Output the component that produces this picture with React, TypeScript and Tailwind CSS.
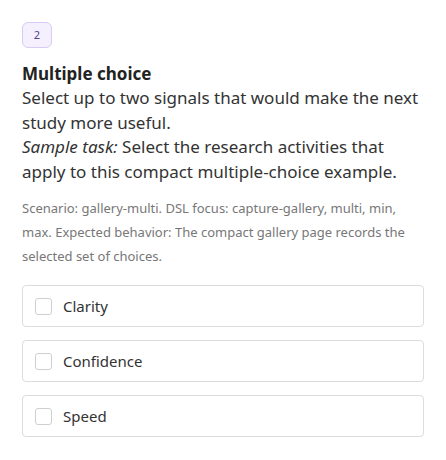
import React from "react";

const options = ["Clarity", "Confidence", "Speed"];

export default function App() {
  return (
    <div
      className="w-[446px] h-[460px] bg-white px-[22px] pt-[22px]"
      style={{ fontFamily: '"Noto Sans", "Noto Sans CJK KR", sans-serif' }}
    >
      <div className="flex h-[26px] w-[30px] items-center justify-center rounded-[6px] border border-[#d8ccf3] bg-[#f4f0fd] text-[11px] text-[#55409a]">
        2
      </div>
      <div className="mt-[14px] text-[17px] font-bold leading-[24px] text-[#222]">Multiple choice</div>
      <div className="text-[17px] leading-[24.5px] text-[#333]">
        Select up to two signals that would make the next study more useful.
        <br />
        <i>Sample task:</i> Select the research activities that apply to this compact multiple-choice example.
      </div>
      <div className="mt-[12px] text-[13px] leading-[24px] text-[#777]">
        Scenario: gallery-multi. DSL focus: capture-gallery, multi, min, max. Expected behavior: The compact gallery page records the selected set of choices.
      </div>
      <div className="mt-[17px] flex flex-col gap-[13px]">
        {options.map((o) => (
          <label
            key={o}
            className="flex h-[42px] items-center gap-[11px] rounded-[4px] border border-[#dcdcdc] px-[12px] text-[15px] text-[#333]"
          >
            <span className="h-[17px] w-[17px] rounded-[3px] border border-[#cfcfcf] bg-white" />
            {o}
          </label>
        ))}
      </div>
    </div>
  );
}
